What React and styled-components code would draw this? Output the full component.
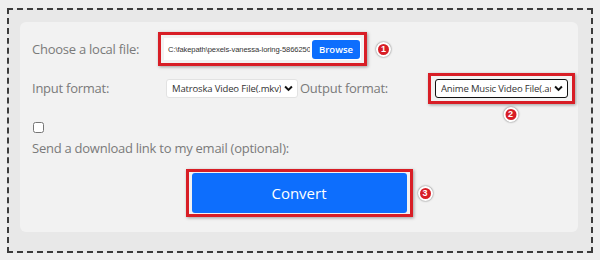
import styled, { createGlobalStyle } from 'styled-components';

const GlobalStyle = createGlobalStyle`
  html, body {
    margin: 0;
    padding: 0;
    background: #efefef;
  }
  * {
    box-sizing: border-box;
  }
`;

function Badge({ n }) {
  return <S.Dot>{n}</S.Dot>;
}

function App() {
  return (
    <>
      <GlobalStyle />
      <S.Page>
        <S.Frame>
          <S.Panel>
            <S.Row $h={30}>
              <S.Label $w={126}>Choose a local file:</S.Label>
              <S.Mark $pad="3px">
                <S.FileBox>
                  <S.FileName>C:\fakepath\pexels-vanessa-loring-5866250.jpg</S.FileName>
                  <S.Browse>Browse</S.Browse>
                </S.FileBox>
              </S.Mark>
              <S.BadgeSlot $ml={9}>
                <Badge n="1" />
              </S.BadgeSlot>
            </S.Row>

            <S.Row $h={30} $mt={9}>
              <S.Label $w={134}>Input format:</S.Label>
              <S.Select $w={132}>
                <span>Matroska Video File(.mkv)</span>
                <Chevron />
              </S.Select>
              <S.Label $w={128} $ml={2}>Output format:</S.Label>
              <S.Mark $pad="3px 4px">
                <S.Select $w={133} $dark>
                  <span>Anime Music Video File(.amv)</span>
                  <Chevron />
                </S.Select>
                <S.BadgeUnder>
                  <Badge n="2" />
                </S.BadgeUnder>
              </S.Mark>
            </S.Row>

            <S.Check type="checkbox" />
            <S.Label>Send a download link to my email (optional):</S.Label>

            <S.Actions>
              <S.Mark $pad="1px 3px">
                <S.Convert>Convert</S.Convert>
              </S.Mark>
              <S.BadgeSlot $ml={5}>
                <Badge n="3" />
              </S.BadgeSlot>
            </S.Actions>
          </S.Panel>
        </S.Frame>
      </S.Page>
    </>
  );
}

function Chevron() {
  return (
    <svg width="9" height="7" viewBox="0 0 10 7">
      <path d="M1.2 1.2 L5 5 L8.8 1.2" fill="none" stroke="#111" strokeWidth="2.2" />
    </svg>
  );
}

export default App;

const Page = styled.div`
  width: 600px;
  height: 260px;
  padding: 8px 7px 7px 7px;
  background: #efefef;
  font-family: 'Open Sans', 'Noto Sans', sans-serif;
`;

const Frame = styled.div`
  height: 245px;
  border: 2px dashed #3c3c3c;
  background: #e8e8e8;
  padding: 12px 13px 19px 11px;
`;

const Panel = styled.div`
  height: 100%;
  background: #f2f2f2;
  border-radius: 6px;
  padding: 12px 12px 0 12px;
`;

const Row = styled.div`
  display: flex;
  align-items: center;
  height: ${({ $h }) => $h}px;
  margin-top: ${({ $mt }) => $mt || 0}px;
`;

const Label = styled.div`
  flex: none;
  width: ${({ $w }) => ($w ? `${$w}px` : 'auto')};
  margin-left: ${({ $ml }) => $ml || 0}px;
  font-size: 13px;
  letter-spacing: -0.25px;
  color: #7a7a7a;
  white-space: nowrap;
`;

const Mark = styled.div`
  position: relative;
  display: flex;
  align-items: center;
  padding: ${({ $pad }) => $pad};
  border: 3px solid #d81e26;
  box-shadow: 1px 1px 3px rgba(0, 0, 0, 0.35);
`;

const FileBox = styled.div`
  display: flex;
  align-items: center;
  gap: 2px;
  background: #fff;
  height: 22px;
  padding-right: 1px;
`;

const FileName = styled.div`
  width: 146px;
  overflow: hidden;
  white-space: nowrap;
  font-family: 'Liberation Sans', Arial, sans-serif;
  font-size: 7.6px;
  letter-spacing: -0.1px;
  color: #333;
  padding-left: 4px;
`;

const Browse = styled.div`
  width: 48px;
  height: 19px;
  display: flex;
  align-items: center;
  justify-content: center;
  background: #0d6efd;
  color: #fff;
  border-radius: 3px;
  font-size: 9.5px;
  font-weight: 600;
`;

const Select = styled.div`
  flex: none;
  width: ${({ $w }) => $w}px;
  height: 19px;
  display: flex;
  align-items: center;
  justify-content: space-between;
  gap: 3px;
  padding: 0 4px 0 5px;
  background: #fff;
  border: ${({ $dark }) => ($dark ? '1px solid #111' : '1px solid #e2e2e2')};
  border-radius: 3px;
  font-size: 9.5px;
  letter-spacing: -0.15px;
  color: #333;

  span {
    overflow: hidden;
    white-space: nowrap;
  }
  svg {
    flex: none;
  }
`;

const Check = styled.input`
  display: block;
  width: 11px;
  height: 11px;
  margin: 19px 0 6px 1px;
`;

const Actions = styled.div`
  display: flex;
  align-items: center;
  justify-content: center;
  margin-top: 12px;
  padding-left: 20px;
`;

const Convert = styled.button`
  width: 215px;
  height: 40px;
  border: none;
  border-radius: 3px;
  background: #0d6efd;
  color: #fff;
  font-family: 'Open Sans', 'Noto Sans', sans-serif;
  font-size: 15px;
`;

const BadgeSlot = styled.div`
  margin-left: ${({ $ml }) => $ml}px;
  display: flex;
`;

const BadgeUnder = styled.div`
  position: absolute;
  left: calc(50% + 9px);
  top: calc(100% + 6px);
  transform: translateX(-50%);
`;

const Dot = styled.div`
  width: 15px;
  height: 15px;
  border-radius: 50%;
  background: #d81e26;
  border: 2px solid #fff;
  box-shadow: 0 0 2px rgba(0, 0, 0, 0.6);
  color: #fff;
  font-family: 'Liberation Sans', Arial, sans-serif;
  font-weight: 700;
  font-size: 9px;
  line-height: 11px;
  text-align: center;
`;

const S = {
  Page,
  Frame,
  Panel,
  Row,
  Label,
  Mark,
  FileBox,
  FileName,
  Browse,
  Select,
  Check,
  Actions,
  Convert,
  BadgeSlot,
  BadgeUnder,
  Dot,
};
